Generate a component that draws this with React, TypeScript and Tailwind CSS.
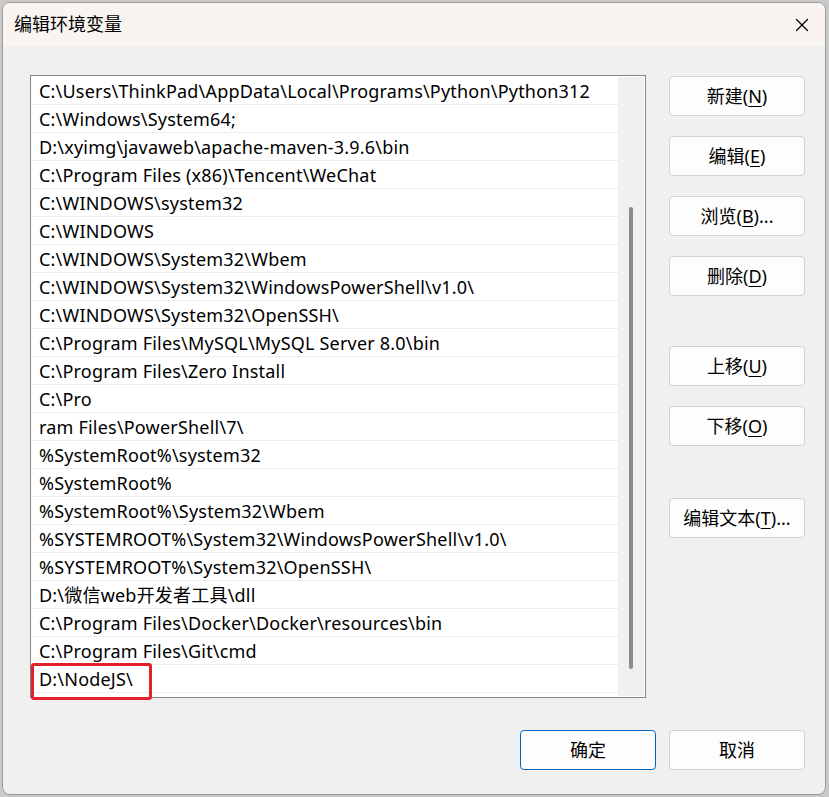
import { X } from 'lucide-react'

const paths = [
  'C:\\Users\\ThinkPad\\AppData\\Local\\Programs\\Python\\Python312',
  'C:\\Windows\\System64;',
  'D:\\xyimg\\javaweb\\apache-maven-3.9.6\\bin',
  'C:\\Program Files (x86)\\Tencent\\WeChat',
  'C:\\WINDOWS\\system32',
  'C:\\WINDOWS',
  'C:\\WINDOWS\\System32\\Wbem',
  'C:\\WINDOWS\\System32\\WindowsPowerShell\\v1.0\\',
  'C:\\WINDOWS\\System32\\OpenSSH\\',
  'C:\\Program Files\\MySQL\\MySQL Server 8.0\\bin',
  'C:\\Program Files\\Zero Install',
  'C:\\Pro',
  'ram Files\\PowerShell\\7\\',
  '%SystemRoot%\\system32',
  '%SystemRoot%',
  '%SystemRoot%\\System32\\Wbem',
  '%SYSTEMROOT%\\System32\\WindowsPowerShell\\v1.0\\',
  '%SYSTEMROOT%\\System32\\OpenSSH\\',
  'D:\\微信web开发者工具\\dll',
  'C:\\Program Files\\Docker\\Docker\\resources\\bin',
  'C:\\Program Files\\Git\\cmd',
  'D:\\NodeJS\\',
]

function WinButton ({ label, hint, suffix = '', primary = false }: { label: string, hint?: string, suffix?: string, primary?: boolean }) {
  return (
    <button
      className={`h-[40px] w-[136px] rounded-[4px] border bg-[#fdfdfd] text-[18px] text-black flex items-center justify-center ${primary ? 'border-[#0067c0]' : 'border-[#d0d0d0]'}`}
    >
      <span>{label}</span>
      {hint && (
        <span>
          (<span className="underline underline-offset-[3px]">{hint}</span>){suffix}
        </span>
      )}
    </button>
  )
}

export default function App () {
  return (
    <div className="w-[829px] h-[797px] bg-[#c9c9c9] pt-[2px] pl-[2px] overflow-hidden font-['Noto_Sans','Noto_Sans_CJK_SC',sans-serif]">
      <div className="w-[824px] h-[793px] rounded-lg border border-[#9a9a9a] bg-[#f0f0f0] overflow-hidden flex flex-col">
        {/* title bar */}
        <div className="h-[43px] shrink-0 bg-[#f9f4ef] flex items-center justify-between pl-[11px] pr-[12px]">
          <span className="text-[18px] text-black">编辑环境变量</span>
          <X className="w-[22px] h-[22px] text-black" strokeWidth={1.3} />
        </div>

        <div className="flex pl-[27px] pt-[29px]">
          {/* list box */}
          <div className="w-[616px] h-[623px] border border-[#82868f] bg-white flex p-[1px]">
            <div className="flex-1 flex flex-col">
              {paths.map((p, i) => (
                <div
                  key={i}
                  className={`h-[28px] shrink-0 border-b border-[#ececec] pl-[7px] pt-[1px] text-[18px] tracking-[0.2px] leading-[26px] text-black whitespace-nowrap ${i === paths.length - 1 ? 'relative' : ''}`}
                >
                  {p}
                  {i === paths.length - 1 && (
                    <div className="absolute left-[-1px] top-[-2px] w-[121px] h-[37px] border-[3px] border-[#e5202a] rounded-[3px]" />
                  )}
                </div>
              ))}
            </div>
            <div className="w-[26px] h-full bg-[#f0f0f0] flex justify-center pt-[130px]">
              <div className="w-[4px] h-[462px] rounded-full bg-[#8a8a8a]" />
            </div>
          </div>

          {/* side buttons */}
          <div className="ml-[23px] pt-[1px] flex flex-col">
            <div className="flex flex-col gap-[20px]">
              <WinButton label="新建" hint="N" />
              <WinButton label="编辑" hint="E" />
              <WinButton label="浏览" hint="B" suffix="..." />
              <WinButton label="删除" hint="D" />
            </div>
            <div className="mt-[50px] flex flex-col gap-[20px]">
              <WinButton label="上移" hint="U" />
              <WinButton label="下移" hint="O" />
            </div>
            <div className="mt-[52px]">
              <WinButton label="编辑文本" hint="T" suffix="..." />
            </div>
          </div>
        </div>

        {/* bottom buttons */}
        <div className="flex justify-end gap-[13px] pr-[20px] mt-[32px]">
          <WinButton label="确定" primary />
          <WinButton label="取消" />
        </div>
      </div>
    </div>
  )
}
